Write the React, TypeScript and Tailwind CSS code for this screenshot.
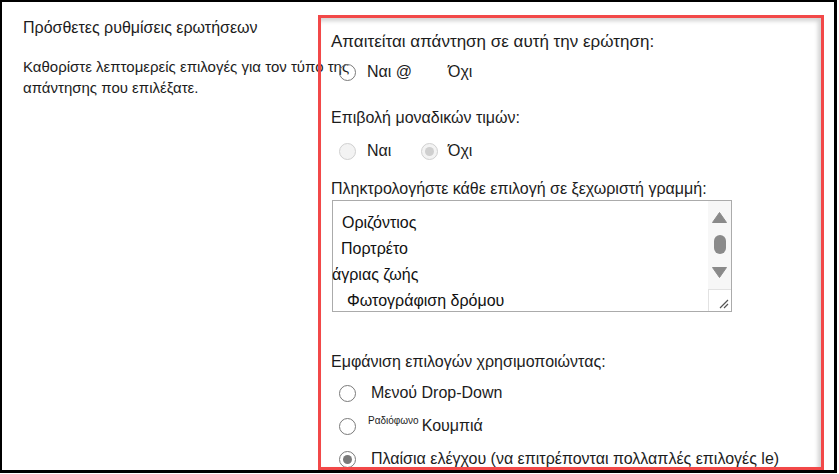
import React from "react";

const font = { fontFamily: '"Liberation Sans", Arial, sans-serif' };

function Radio({
  checked = false,
  disabled = false,
  hidden = false,
}: {
  checked?: boolean;
  disabled?: boolean;
  hidden?: boolean;
}) {
  if (hidden) return <span className="inline-block h-[17px] w-[17px] shrink-0" />;
  return (
    <span
      className={`grid h-[17px] w-[17px] shrink-0 place-items-center rounded-full border-[1.5px] ${
        disabled ? "border-[#d0d0d0] bg-[#f3f3f3]" : "border-[#7a7a7a]"
      }`}
    >
      {checked && (
        <span
          className={`h-[9px] w-[9px] rounded-full ${
            disabled ? "bg-[#cfcfcf]" : "bg-[#7a7a7a]"
          }`}
        />
      )}
    </span>
  );
}

function ChoicesBox() {
  return (
    <div className="ml-[11px] mt-px flex h-[112px] w-[400px] border border-[#ababab] bg-white">
      <div className="flex-1 pt-[9px] text-[16px] leading-[26px] text-[#111]">
        <div className="pl-[9px]">Οριζόντιος</div>
        <div className="pl-[8px]">Πορτρέτο</div>
        <div className="-ml-px">άγριας ζωής</div>
        <div className="pl-[14px]">Φωτογράφιση δρόμου</div>
      </div>
      <div className="flex w-[23px] flex-col bg-[#f7f7f7]">
        <div className="flex flex-1 flex-col items-center">
          <svg className="mt-[11px]" width="15" height="11" viewBox="0 0 15 11">
            <path d="M7.5 0.5 L14.5 10.5 L0.5 10.5 Z" fill="#8a8a8a" strokeLinejoin="round" stroke="#8a8a8a" />
          </svg>
          <span className="mt-[12px] h-[19px] w-[12px] rounded-full bg-[#8a8a8a]" />
          <svg className="mt-[13px]" width="15" height="11" viewBox="0 0 15 11">
            <path d="M0.5 0.5 L14.5 0.5 L7.5 10.5 Z" fill="#8a8a8a" strokeLinejoin="round" stroke="#8a8a8a" />
          </svg>
        </div>
        <div className="relative h-[22px] border-l border-t border-[#e2e2e2] bg-white">
          <svg className="absolute bottom-[2px] right-[2px]" width="11" height="11" viewBox="0 0 11 11">
            <path d="M10 2 L2 10 M10 6 L6 10" stroke="#555" strokeWidth="1.2" />
          </svg>
        </div>
      </div>
    </div>
  );
}

export default function App() {
  return (
    <div className="h-[474px] w-[839px] bg-white" style={font}>
      <div className="flex h-[473px] w-[837px] border-b-[3px] border-l-2 border-r-[3px] border-t-2 border-black">
        <div className="w-[316px] shrink-0 pl-[21px] pt-[16px] text-[#1c1c1c]">
          <div className="whitespace-nowrap text-[16px] leading-[20px]">Πρόσθετες ρυθμίσεις ερωτήσεων</div>
          <div className="mt-[18px] text-[15px] leading-[21px]">
            <div className="whitespace-nowrap">Καθορίστε λεπτομερείς επιλογές για τον τύπο της</div>
            <div>απάντησης που επιλέξατε.</div>
          </div>
        </div>

        <section className="mt-[13px] h-[455px] w-[506px] overflow-hidden border-[3px] border-[#f24848] text-[16px] leading-[20px] text-[#1c1c1c] shadow-[inset_-3px_3px_4px_rgba(0,0,0,0.18)]">
          <div className="ml-[10px] mt-[14px] text-[17px]">Απαιτείται απάντηση σε αυτή την ερώτηση:</div>
          <div className="ml-[18px] mt-[10px] flex h-[20px] items-center">
            <Radio />
            <span className="ml-[11px] w-[54px]">Ναι @</span>
            <Radio hidden />
            <span className="ml-[10px]">Όχι</span>
          </div>

          <div className="ml-[10px] mt-[26px]">Επιβολή μοναδικών τιμών:</div>
          <div className="ml-[18px] mt-[13px] flex h-[20px] items-center">
            <Radio disabled />
            <span className="ml-[11px] w-[54px]">Ναι</span>
            <Radio disabled checked />
            <span className="ml-[10px]">Όχι</span>
          </div>

          <div className="ml-[10px] mt-[18px]">Πληκτρολογήστε κάθε επιλογή σε ξεχωριστή γραμμή:</div>
          <ChoicesBox />

          <div className="ml-[10px] mt-[40px]">Εμφάνιση επιλογών χρησιμοποιώντας:</div>
          <div className="ml-[18px] mt-[11px] flex h-[20px] items-center gap-[15px]">
            <Radio />
            <span>Μενού Drop-Down</span>
          </div>
          <div className="ml-[18px] mt-[13px] flex h-[20px] items-center gap-[12px]">
            <Radio />
            <span className="flex items-center gap-[3px]">
              <span className="-translate-y-[5px] text-[10px] leading-[12px]">Ραδιόφωνο</span>
              <span>Κουμπιά</span>
            </span>
          </div>
          <div className="ml-[18px] mt-[13px] flex h-[20px] items-center gap-[15px]">
            <Radio checked />
            <span className="whitespace-nowrap">Πλαίσια ελέγχου (να επιτρέπονται πολλαπλές επιλογές le)</span>
          </div>
        </section>
      </div>
    </div>
  );
}
